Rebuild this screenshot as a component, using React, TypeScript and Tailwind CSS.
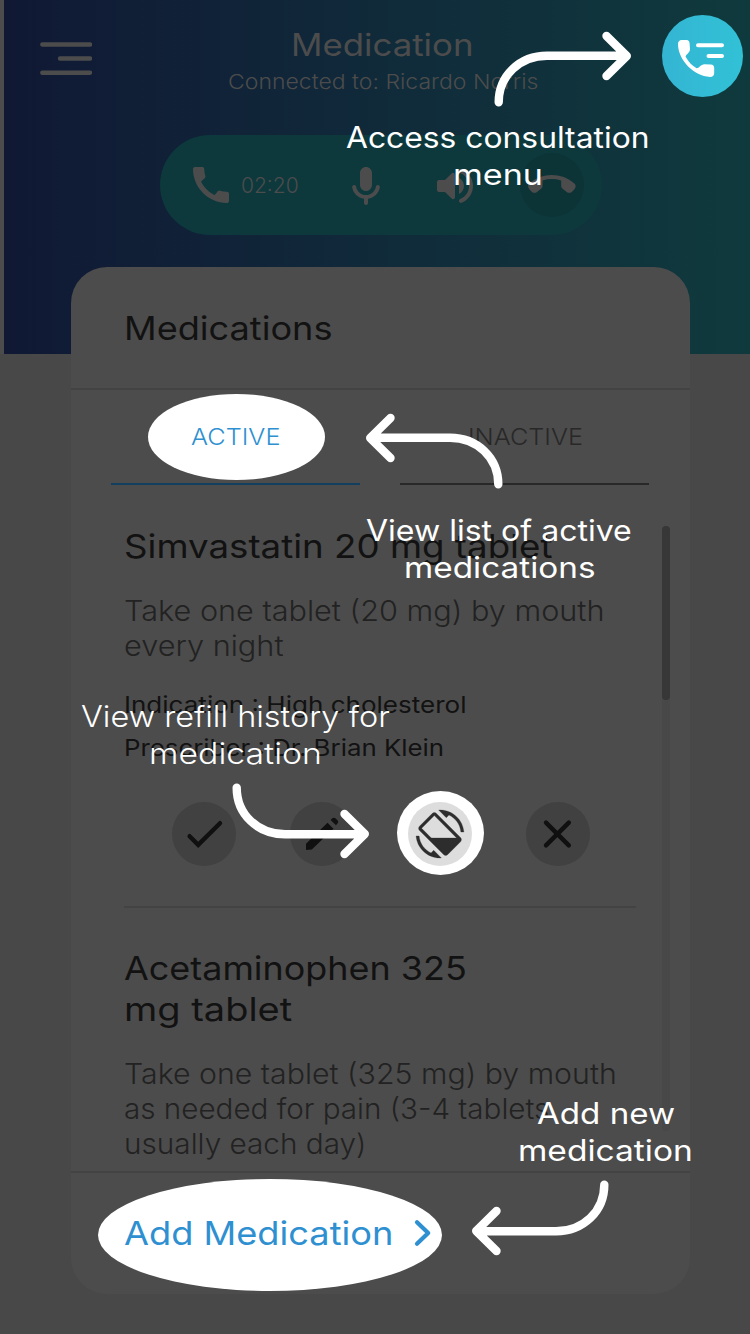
import { useLayoutEffect, useRef, useState, type ReactNode } from "react";

/* One line of text, widened or narrowed to fill exactly `w` pixels. */
function Line({ w, className = "", children }: { w: number; className?: string; children: ReactNode }) {
  const ref = useRef<HTMLSpanElement>(null);
  const [k, setK] = useState(1);
  useLayoutEffect(() => {
    if (ref.current) setK(w / ref.current.offsetWidth);
  }, [w]);
  return (
    <span className={"block shrink-0 whitespace-nowrap " + className} style={{ width: w }}>
      <span ref={ref} className="inline-block origin-left" style={{ transform: `scaleX(${k})` }}>
        {children}
      </span>
    </span>
  );
}

function Icon({ d, className = "" }: { d: string; className?: string }) {
  return (
    <svg viewBox="0 0 24 24" fill="currentColor" className={"size-12 shrink-0 " + className}>
      <path d={d} />
    </svg>
  );
}

const CALL =
  "M20.01 15.38c-1.23 0-2.42-.2-3.53-.56-.35-.12-.74-.03-1.01.24l-1.57 1.97c-2.83-1.35-5.48-3.9-6.89-6.83l1.95-1.66c.27-.28.35-.67.24-1.02-.37-1.11-.56-2.3-.56-3.53 0-.54-.45-.99-.99-.99H4.19C3.65 3 3 3.24 3 3.99 3 13.28 10.73 21 20.01 21c.71 0 .99-.63.99-1.18v-3.45c0-.54-.45-.99-.99-.99z";
const CALL_ROUND =
  "M3 5C3 3.6 3.6 2.8 4.9 2.8H7.3C8.3 2.8 8.7 3.5 8.8 4.5L9 7.2C9 9.2 6.9 9.8 6.8 11.1C8.2 13.5 10 15.6 12.3 16.9C13.6 16.9 14.4 14.9 16.2 14.9L19.4 15C20.6 15.1 21.1 15.7 21.1 16.8V19.2C21.1 20.6 20.3 21.2 19 21.2C11 20.8 3.2 13 3 5Z";
const MIC =
  "M12 14c1.66 0 3-1.34 3-3V5c0-1.66-1.34-3-3-3S9 3.34 9 5v6c0 1.66 1.34 3 3 3zm5.91-3c-.49 0-.9.36-.98.85C16.52 14.2 14.47 16 12 16s-4.52-1.8-4.93-4.15c-.08-.49-.49-.85-.98-.85-.61 0-1.09.54-1 1.14.49 3 2.89 5.35 5.91 5.78V20c0 .55.45 1 1 1s1-.45 1-1v-2.08c3.02-.43 5.42-2.78 5.91-5.78.1-.6-.39-1.14-1-1.14z";
const VOLUME =
  "M3 10v4c0 .55.45 1 1 1h3l3.29 3.29c.63.63 1.71.18 1.71-.71V6.41c0-.89-1.08-1.34-1.71-.71L7 9H4c-.55 0-1 .45-1 1zm13.5 2A4.5 4.5 0 0 0 14 7.97v8.05c1.48-.73 2.5-2.25 2.5-4.02zM14 4.45v.2c0 .38.25.71.6.85C17.18 6.53 19 9.06 19 12s-1.82 5.47-4.4 6.5c-.36.14-.6.47-.6.85v.2c0 .63.63 1.07 1.21.85C18.6 19.11 21 15.84 21 12s-2.4-7.11-5.79-8.4c-.58-.23-1.21.22-1.21.85z";
const HANG_UP =
  "M4.51 15.48l2-1.59c.48-.38.76-.96.76-1.57v-2.6c3.02-.98 6.29-.99 9.32 0v2.61c0 .61.28 1.19.76 1.57l1.99 1.58c.8.63 1.94.57 2.66-.15l1.22-1.22c.8-.8.8-2.13-.05-2.88-6.41-5.66-16.07-5.66-22.48 0-.85.75-.85 2.08-.05 2.88l1.22 1.22c.71.72 1.85.78 2.65.15z";
const REFILL =
  "M16.48 2.52c3.27 1.55 5.61 4.72 5.97 8.48h1.5C23.44 4.84 18.29 0 12 0l-.66.03 3.81 3.81 1.33-1.32zm-6.25-.77c-.59-.59-1.54-.59-2.12 0L1.75 8.11c-.59.59-.59 1.54 0 2.12l12.02 12.02c.59.59 1.54.59 2.12 0l6.36-6.36c.59-.59.59-1.54 0-2.12L10.23 1.75zm4.6 19.44L2.81 9.17l6.36-6.36 12.02 12.02-6.36 6.36zm-7.31.29C4.25 19.94 1.91 16.76 1.55 13H.05C.56 19.16 5.71 24 12 24l.66-.03-3.81-3.81-1.33 1.32z";

/* Curved pointer; drawn going up and to the right, flipped by the caller. */
function Arrow({ className = "" }: { className?: string }) {
  return (
    <svg
      viewBox="0 0 142 80"
      fill="none"
      stroke="white"
      strokeWidth="8.4"
      strokeLinecap="round"
      strokeLinejoin="round"
      className={"absolute h-20 w-[142px] overflow-visible " + className}
    >
      <path d="M8.7 76.3C8.7 49.5 30 29.7 57 29.7H136M116.5 10L136.8 30L116.5 50" />
    </svg>
  );
}

const TITLE = "text-[33px] font-[430] text-[#121212]";
const BODY = "text-[28px] leading-[35px] font-light text-[#222222]";
const FACT = "text-[23px] leading-[43px] font-[430] text-[#121212]";
const HINT = "text-[29.5px] leading-[37px] font-[430]";
const ROUND = "flex size-16 items-center justify-center rounded-full bg-[#414141] text-[#101010]";

export default function App() {
  return (
    <div className="relative h-[1334px] w-[750px] overflow-hidden bg-[#484848] font-['Inter',sans-serif]">
      <header className="h-[354px] border-l-4 border-[#4c4c4c] bg-linear-to-r from-[#101834] via-[#102a3a] to-[#0f3a3d] pt-[22px] text-[#4c4c4c]">
        <div className="flex h-[113px] items-start">
          <svg viewBox="0 0 52 34" className="mt-[19px] ml-9 h-[34px] w-[52px]" stroke="currentColor" strokeWidth="4.4" strokeLinecap="round">
            <path d="M2.3 3.5H50M20 17.5H50M2.3 31.7H50" />
          </svg>
          <div className="flex w-[578px] flex-col items-center">
            <Line w={183} className="ml-0.5 text-[31px] leading-[45px] font-[430]">Medication</Line>
            <Line w={310} className="ml-1 text-[20.5px] leading-[29px] font-light">Connected to: Ricardo Norris</Line>
          </div>
        </div>
        <div className="ml-[156px] flex h-[100px] w-[442px] items-center rounded-full bg-[#0d393d]">
          <Icon d={CALL} className="ml-[27px]" />
          <Line w={58} className="mt-0.5 ml-1.5 text-[21px] leading-[30px] font-light">02:20</Line>
          <Icon d={MIC} className="mt-1 ml-[43px]" />
          <Icon d={VOLUME} className="mt-0.5 ml-[41px]" />
          <div className="ml-[41px] flex size-16 items-center justify-center rounded-full bg-[#0c3437]">
            <Icon d={HANG_UP} />
          </div>
        </div>
      </header>

      <main className="relative -mt-[87px] ml-[71px] flex h-[1027px] w-[619px] flex-col rounded-[36px] bg-[#4c4c4c]">
        <h1 className="flex h-[123px] items-center border-b-2 border-[#434343] pt-0.5 pl-[53px]">
          <Line w={208} className={TITLE}>Medications</Line>
        </h1>
        <div className="flex gap-10 pl-10">
          <div className="relative flex h-[95px] w-[249px] items-center justify-center border-b-2 border-[#123f60] pt-px">
            <div className="absolute top-1 left-[37px] h-[86px] w-[177px] rounded-[50%] bg-white" />
            <Line w={89} className="relative text-[23px] leading-8 font-light text-[#2e90d1]">ACTIVE</Line>
          </div>
          <div className="flex h-[95px] w-[249px] items-center justify-center border-b-2 border-[#282828] pt-px">
            <Line w={115} className="ml-0.5 text-[23px] leading-8 font-light text-[#282828]">INACTIVE</Line>
          </div>
        </div>

        <div className="flex h-[686px] justify-between overflow-hidden pr-5 pl-[53px]">
          <div className="w-[512px]">
            <Line w={428} className={"mt-10 leading-[42px] " + TITLE}>Simvastatin 20 mg tablet</Line>
            <div className={"mt-[27px] " + BODY}>
              <Line w={480}>Take one tablet (20 mg) by mouth</Line>
              <Line w={160}>every night</Line>
            </div>
            <div className={"mt-5 " + FACT}>
              <Line w={343}>Indication : High cholesterol</Line>
              <Line w={320}>Prescriber : Dr. Brian Klein</Line>
            </div>
            <div className="mt-8 ml-12 flex gap-[54px]">
              <div className={ROUND}>
                <svg viewBox="0 0 64 64" fill="none" stroke="currentColor" strokeWidth="4.4" strokeLinecap="round">
                  <path d="M17.6 34.2L26.2 42.8L48 21.2" />
                </svg>
              </div>
              <div className={ROUND}>
                <svg viewBox="0 0 64 64" fill="currentColor">
                  <path d="M16 48v-6.2L37.5 20.8l6 6L21.8 47.4zM40.6 18l1.5-1.5c1-1 2.6-1 3.6 0l1.7 1.7c1 1 1 2.4 0 3.4l-1.4 1.6z" />
                </svg>
              </div>
              <div className="relative flex size-16 items-center justify-center">
                <div className="absolute -top-[11px] -left-[11px] h-[84px] w-[87px] rounded-[50%] bg-white" />
                <div className="relative flex size-16 items-center justify-center rounded-full bg-[#dddddd] text-[#2d2d2d]">
                  <svg viewBox="0 0 24 24" fill="currentColor" stroke="currentColor" strokeWidth="0.15" className="size-12 overflow-visible">
                    <path d={REFILL} />
                    <path d="M7 14H21.4L21.9 14.8L14.8 21.9z" />
                  </svg>
                </div>
              </div>
              <div className={ROUND}>
                <svg viewBox="0 0 64 64" stroke="currentColor" strokeWidth="4.4" strokeLinecap="round">
                  <path d="M20 20.6L42.8 43.4M42.8 20.6L20 43.4" />
                </svg>
              </div>
            </div>
            <div className="mt-10 h-0.5 bg-[#434343]" />
            <div className={"mt-10 leading-[41px] " + TITLE}>
              <Line w={343}>Acetaminophen 325</Line>
              <Line w={168}>mg tablet</Line>
            </div>
            <div className={"mt-[27px] " + BODY}>
              <Line w={493}>Take one tablet (325 mg) by mouth</Line>
              <Line w={425}>as needed for pain (3-4 tablets</Line>
              <Line w={242}>usually each day)</Line>
            </div>
          </div>
          <div className="mt-[41px] h-[605px] w-2 rounded-full bg-[#484848]">
            <div className="h-[174px] rounded-full bg-[#373737]" />
          </div>
        </div>

        <footer className="relative flex grow items-center border-t-2 border-[#434343] pl-[53px] text-[#2e90d1]">
          <div className="absolute top-1.5 left-[27px] h-[112px] w-[344px] rounded-[50%] bg-white" />
          <Line w={270} className="relative mb-0.5 text-[33px] leading-[42px] font-[430]">Add Medication</Line>
          <svg viewBox="0 0 18 28" fill="none" stroke="currentColor" strokeWidth="4.2" strokeLinecap="round" strokeLinejoin="round" className="relative mb-0.5 ml-5 h-7 w-[18px]">
            <path d="M3 3.2L14.2 14L3 24.8" />
          </svg>
        </footer>
      </main>

      <div className="absolute inset-0 text-white">
        <div className="absolute top-[15px] left-[662px] h-[82px] w-[81px] rounded-[50%] bg-linear-to-r from-[#34b5d3] to-[#31c1d6]">
          <svg viewBox="0 0 81 82" className="h-[82px] w-[81px]">
            <g transform="translate(10 19.5) scale(2)" fill="white">
              <path d={CALL_ROUND} />
            </g>
            <path d="M36 30.2H60M46.5 41H60" stroke="white" strokeWidth="4" strokeLinecap="round" />
          </svg>
        </div>
        <Arrow className="top-[26px] left-[490px]" />
        <Arrow className="top-[408px] left-[365px] -scale-x-100" />
        <Arrow className="top-[784px] left-[228px] -scale-y-100" />
        <Arrow className="top-[1181px] left-[471px] -scale-100" />

        <div className={"absolute top-[119px] left-[346px] flex w-[304px] flex-col items-center " + HINT}>
          <Line w={304}>Access consultation</Line>
          <Line w={90}>menu</Line>
        </div>
        <div className={"absolute top-[512px] left-[366px] flex w-[266px] flex-col items-center " + HINT}>
          <Line w={266}>View list of active</Line>
          <Line w={191}>medications</Line>
        </div>
        <div className="absolute top-[698px] left-[81px] flex w-[309px] flex-col items-center text-[29.5px] leading-[37px] font-light">
          <Line w={309}>View refill history for</Line>
          <Line w={173}>medication</Line>
        </div>
        <div className={"absolute top-[1095px] left-[518px] flex w-[175px] flex-col items-center " + HINT}>
          <Line w={138}>Add new</Line>
          <Line w={175}>medication</Line>
        </div>
      </div>
    </div>
  );
}
